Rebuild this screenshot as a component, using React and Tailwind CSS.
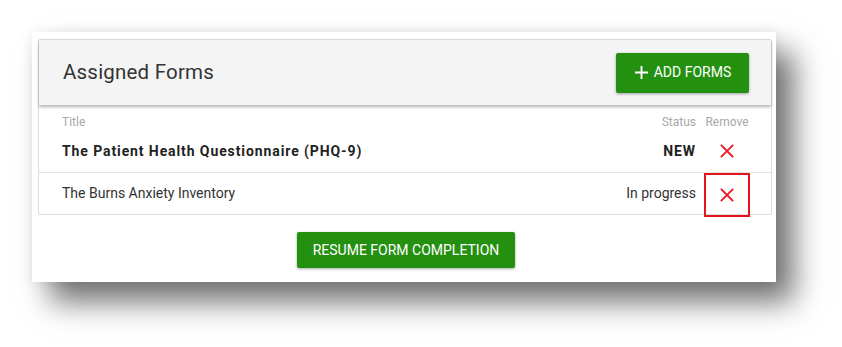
import React from "react";

function XIcon({ className }) {
  return (
    <svg viewBox="0 0 16 16" className={className} fill="none" stroke="currentColor" strokeWidth="1.8" strokeLinecap="square">
      <path d="M2.5 2.5 L13.5 13.5 M13.5 2.5 L2.5 13.5" />
    </svg>
  );
}

export default function App() {
  return (
    <div className="w-[842px] h-[347px] bg-white pt-[32px] pl-[32px]" style={{ fontFamily: "Roboto, 'Noto Sans', sans-serif" }}>
      <div className="w-[744px] h-[250px] bg-white shadow-[18px_20px_28px_rgba(0,0,0,0.55),0_0_12px_rgba(0,0,0,0.08)] pt-[7px] pl-[6px]">
        <div className="w-[734px] border border-[#dcdcdc] rounded-[2px] bg-white">
          <div className="h-[65px] bg-[#f4f4f4] flex items-center justify-between pl-[24px] pr-[22px] shadow-[0_2px_3px_rgba(0,0,0,0.3)] relative">
            <div className="text-[20.5px] text-[#333] tracking-[0.2px]">Assigned Forms</div>
            <button className="h-[40px] w-[133px] bg-[#24900f] text-white text-[14px] rounded-[2px] flex items-center justify-center gap-[5px] shadow-[0_1px_3px_rgba(0,0,0,0.35)]">
              <svg viewBox="0 0 16 16" className="w-[15px] h-[15px]" fill="none" stroke="currentColor" strokeWidth="2">
                <path d="M8 1 V15 M1 8 H15" />
              </svg>
              <span>ADD FORMS</span>
            </button>
          </div>
          <div className="pl-[23px] pr-[22px] pt-[9px] h-[25px] flex items-center text-[12px] text-[#a8a8a8]">
            <div className="flex-1">Title</div>
            <div className="mr-[9px]">Status</div>
            <div className="w-[44px] text-center">Remove</div>
          </div>
          <div className="h-[43px] flex items-center pl-[23px] pr-[22px] border-b border-[#e4e4e4]">
            <div className="flex-1 text-[14px] font-bold text-[#222] tracking-[0.9px]">The Patient Health Questionnaire (PHQ-9)</div>
            <div className="mr-[9px] text-[14px] font-bold text-[#222] tracking-[0.9px]">NEW</div>
            <div className="w-[44px] flex justify-center">
              <XIcon className="w-[16px] h-[16px] text-[#ec1c24]" />
            </div>
          </div>
          <div className="h-[41px] flex items-center pl-[23px] pr-[21px]">
            <div className="flex-1 text-[14px] text-[#333]">The Burns Anxiety Inventory</div>
            <div className="mr-[8px] text-[14px] text-[#333]">In progress</div>
            <div className="w-[46px] h-[44px] border-2 border-[#e8141c] flex items-center justify-center mt-[2px]">
              <XIcon className="w-[16px] h-[16px] text-[#ec1c24]" />
            </div>
          </div>
        </div>
        <div className="flex justify-center pt-[17px] pr-[2px]">
          <button className="h-[36px] w-[218px] bg-[#24900f] text-white text-[14px] rounded-[2px] shadow-[0_1px_3px_rgba(0,0,0,0.35)]">
            RESUME FORM COMPLETION
          </button>
        </div>
      </div>
    </div>
  );
}
